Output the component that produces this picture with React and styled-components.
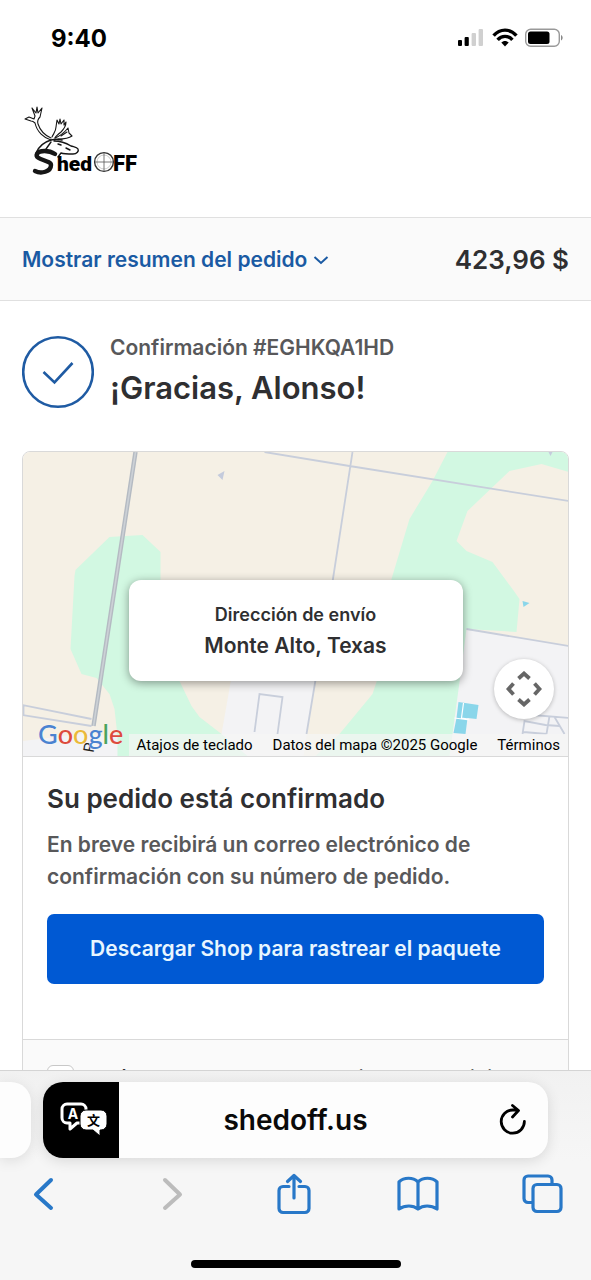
import React from "react";
import styled, { createGlobalStyle } from "styled-components";

const ui = `Inter, "Liberation Sans", sans-serif`;

const Global = createGlobalStyle`
  *, *::before, *::after { box-sizing: border-box; }
  html, body { margin: 0; background: #fff; }
  body { font-family: ${ui}; color: #2f2f31; }
  h1, h2, p { margin: 0; font-weight: 600; }
  button { font: inherit; border: 0; padding: 0; background: none; cursor: pointer; }
  a { text-decoration: none; color: inherit; }
  svg { display: block; }
`;

const Screen = styled.div`
  display: flex;
  flex-direction: column;
  height: 100vh;
  overflow: hidden;
`;

const StatusBar = styled.div`
  display: flex;
  flex: none;
  align-items: center;
  justify-content: space-between;
  height: 76px;
  padding: 0 27px 0 51px;
  background: #fff;
`;

const Clock = styled.time`
  font-size: 24px;
  font-weight: 700;
  color: #000;
`;

const Page = styled.main`
  flex: 1;
  min-height: 0;
  overflow: hidden;
`;

const Brand = styled.header`
  height: 141px;
  padding: 27px 22px 0;
`;

const SummaryBar = styled.section`
  display: flex;
  align-items: center;
  justify-content: space-between;
  height: 84px;
  padding: 0 22px;
  background: #fafafa;
  border: solid #e0e0e0;
  border-width: 1px 0;
`;

const SummaryToggle = styled.button`
  display: flex;
  align-items: center;
  gap: 6px;
  font-size: 21px;
  font-weight: 600;
  color: #1a5aa3;
`;

const Total = styled.strong`
  font-size: 26px;
  font-weight: 600;
`;

const Thanks = styled.section`
  display: flex;
  align-items: center;
  gap: 16px;
  padding: 31px 22px 39px;
`;

const ThanksText = styled.div`
  display: flex;
  flex-direction: column;
`;

const Confirmation = styled.p`
  font-size: 21px;
  line-height: 32px;
  color: #58585a;
`;

const Greeting = styled.h1`
  font-size: 31px;
  line-height: 48px;
`;

const Card = styled.section`
  margin: 0 22px;
  border: 1px solid #d9d9d9;
  border-radius: 8px;
  overflow: hidden;
`;

const MapArea = styled.div`
  position: relative;
  height: 305px;
  border-bottom: 1px solid #d9d9d9;
  overflow: hidden;
`;

const MapDrawing = styled.svg`
  width: 100%;
  height: 100%;
`;

const AddressBubble = styled.div`
  position: absolute;
  top: 128px;
  left: 50%;
  transform: translateX(-50%);
  width: 334px;
  padding: 19px 0 20px;
  border-radius: 12px;
  background: #fff;
  box-shadow: 0 2px 10px rgba(0, 0, 0, 0.4);
  text-align: center;
`;

const BubbleLabel = styled.p`
  font-size: 18px;
  line-height: 31px;
`;

const BubblePlace = styled.p`
  font-size: 21px;
  line-height: 31px;
`;

const PanButton = styled.button`
  position: absolute;
  right: 14px;
  bottom: 37px;
  display: grid;
  place-items: center;
  width: 60px;
  height: 60px;
  border-radius: 50%;
  background: #fff;
  box-shadow: 0 1px 4px rgba(0, 0, 0, 0.25);
`;

const MapFooter = styled.div`
  position: absolute;
  right: 0;
  bottom: 0;
  display: flex;
  justify-content: flex-end;
  gap: 20px;
  height: 22px;
  padding: 0 8px 0 8px;
  background: rgba(245, 245, 245, 0.7);
  font-family: Roboto, "Liberation Sans", sans-serif;
  font-size: 15px;
  line-height: 23px;
  white-space: nowrap;
  color: #000;
`;

const GoogleMark = styled.a`
  position: absolute;
  left: 15px;
  bottom: 4px;
  display: flex;
  font-family: Lato, sans-serif;
  font-size: 27px;
  font-weight: 500;
  line-height: 36px;
  text-shadow: 0 0 1px #fff;
`;

const Letter = styled.span`
  color: ${(p) => p.$color};
`;

const CardBody = styled.div`
  padding: 24px 24px 55px;
`;

const CardTitle = styled.h2`
  font-size: 26px;
  line-height: 36px;
`;

const CardText = styled.p`
  margin: 12px 0 21px;
  font-size: 21px;
  line-height: 32px;
  color: #58585a;
`;

const ShopLink = styled.a`
  display: block;
  border-radius: 7px;
  background: #0059d3;
  font-size: 21px;
  font-weight: 600;
  line-height: 70px;
  text-align: center;
  color: #e8f6ff;
`;

const OptIn = styled.label`
  display: flex;
  gap: 9px;
  padding: 23px 24px;
  border-top: 1px solid #d9d9d9;
  background: #fafafa;
  font-size: 21px;
  font-weight: 500;
  line-height: 32px;
`;

const OptInBox = styled.input`
  appearance: none;
  flex: none;
  width: 27px;
  height: 27px;
  margin: 2px 0;
  border: 1px solid #c8c8c8;
  border-radius: 6px;
  background: #fff;
`;

const BrowserBar = styled.footer`
  flex: none;
  border-top: 1px solid #d4d4d4;
  background: linear-gradient(#f1f1f1, #f6f6f6 90px);
`;

const TabStrip = styled.div`
  display: grid;
  grid-template-columns: 31px 1fr 31px;
  gap: 12px;
  height: 87px;
  padding-top: 11px;
`;

const PreviousTab = styled.div`
  height: 76px;
  border-radius: 0 20px 20px 0;
  background: #fdfdfd;
  box-shadow: 0 3px 14px rgba(0, 0, 0, 0.1);
`;

const AddressBar = styled.div`
  display: grid;
  grid-template-columns: 76px 1fr 72px;
  align-items: center;
  height: 76px;
  border-radius: 20px;
  overflow: hidden;
  background: #fdfdfd;
  box-shadow: 0 3px 14px rgba(0, 0, 0, 0.12);
`;

const TranslateButton = styled.button`
  display: grid;
  place-items: center;
  height: 76px;
  padding: 0 0 0 6px;
  background: #000;
`;

const Host = styled.div`
  padding-right: 4px;
  text-align: center;
  font-size: 28px;
  font-weight: 600;
  color: #0a0a0a;
`;

const tones = { on: "#2878c8", off: "#bcbcbc", dark: "#000" };

const IconButton = styled.button`
  display: grid;
  place-items: center;
  color: ${(p) => tones[p.$tone || "on"]};
`;

const Toolbar = styled.nav`
  display: flex;
  align-items: center;
  justify-content: space-between;
  height: 74px;
  padding: 0 27px 0 22px;
`;

const HomeIndicator = styled.div`
  width: 210px;
  height: 8px;
  margin: 28px auto 12px;
  border-radius: 4px;
  background: #000;
`;

const StatusIcons = () => (
  <svg width="106" height="20" viewBox="0 0 106 20" role="img" aria-label="Señal, wifi y batería">
    <rect x="0" y="12" width="4" height="6" rx="1" />
    <rect x="6.600" y="9" width="4.200" height="9" rx="1" />
    <rect x="13.600" y="5" width="4.400" height="13" rx="1" fill="#d0d0d0" />
    <rect x="20.600" y="1" width="4.400" height="17" rx="1" fill="#d0d0d0" />
    <g fill="none" stroke="#000" strokeWidth="3.400">
      <path d="M35.600 7.600C42 .3 52 .3 58.400 7.600" />
      <path d="M39.600 11.800c4-4.600 10.800-4.600 14.800 0" />
    </g>
    <path d="M43.300 14.600c2-2.200 5.400-2.200 7.400 0L47 18.500Z" />
    <rect x="67.700" y="1.200" width="33.600" height="17" rx="5" fill="#fff" stroke="#999" strokeWidth="1.400" />
    <rect x="70" y="3.500" width="21.500" height="12.500" rx="2.500" />
    <path d="M103 7c2.200 1 2.200 4.500 0 5.500Z" fill="#888" />
  </svg>
);

const BrandLogo = () => (
  <svg width="120" height="74" viewBox="0 0 120 74" role="img" aria-label="ShedOFF">
    <g fill="none" stroke="#161616" strokeLinecap="round" strokeLinejoin="round">
      <path strokeWidth="1.100" d="M29 37C22 35 15 29 13 20c-1-1-2-2-4-2L3 16l4-2 5 2 1-3-3-8 4 5 1-6 1 6 4-5-2 9c-2 2-3 4-2 7 2 6 6 11 13 14" />
      <path strokeWidth="1.100" d="M30 34c2-4 4-6 4-10l1-7 2 4 1-5 1 5 3-4 0 5 2-3c0 5-3 8-5 10-4 3-5 4-6 6" />
      <path strokeWidth="1.100" d="M33 35c5-2 9-5 13-10l1 5 3 3c-4 3-9 3-14 3M39 33l6-4" />
      <path strokeWidth="1.400" d="M14 50c3-7 8-11 15-13 4-1 7-1 11 0M24 46l5-7M32 38c7 0 12 2 17 5 3 1 6 1 7 3s-1 5-5 5c-5 0-9 0-12-1l-3 4M36 41l3 1M44 45l4 2" />
      <path strokeWidth="4.400" d="M33 51c-6-4-16-4-18 0-3 6 14 6 14 11 0 7-10 9-16 6" />
    </g>
    <g fontFamily="Roboto, sans-serif" fontWeight="900" fill="#000">
      <text x="35" y="68" fontSize="21">hed</text>
      <text x="91" y="68" fontSize="22">FF</text>
    </g>
    <circle cx="82" cy="59" r="9.400" fill="#fff" stroke="#333" strokeWidth="1.400" />
    <circle cx="82" cy="59" r="7" fill="none" stroke="#aaa" strokeWidth=".6" />
    <path d="M82 50v18M73 59h18" stroke="#555" strokeWidth=".8" />
  </svg>
);

const MapArt = () => (
  <MapDrawing viewBox="0 0 546 304" preserveAspectRatio="xMidYMid slice" aria-hidden="true">
    <path fill="#f5f0e5" d="M0 0h546v304H0z" />
    <path fill="#f3f3f5" d="M0 289l66-8 30 4v19H0zM209 225h84l-12 79h-66l-16-22zM444 177l102 17v110H425z" />
    <path fill="#d2f8e2" d="M87 85l33-2 18 17v60l19 69 12 25 8 11 22 17 26 22H95v-20l-3-27-5-15-13-16-15-4-11-25 4-73 1-6z" />
    <path fill="#d2f8e2" d="M425 0h121v20l-27-8-32 7-42 40-11 30 10 10 26 11 20 27 7 10-3 33-50-3-7 53-7 52-3 22H293l24-22 33-40 4-12 15-103 18-60 23-38z" />
    <g fill="none" stroke="#c8cedb" strokeWidth="1.800">
      <path d="M242 0l85 14 219 35M330 0l-20 130M293 228l-9 54M444 177l102 17M0 253l69 14M0 263l69 11M1 253v10" />
      <path d="M232 280l5-38 23 3-5 37M500 282l2-13 21 4 14 1M510 263l36 3M527 264l-3 18M532 265l10 17M501 280l23 2" />
    </g>
    <path d="M113 0L71 274" fill="none" stroke="#b4bac2" strokeWidth="4.400" />
    <path d="M113 0L71 274" fill="none" stroke="#ccd1d6" strokeWidth="1.600" />
    <path fill="#c4cbdc" d="M202 19l-7 4 5 5zM526 0h4l-2 4z" />
    <path fill="#8ad6ea" d="M500 149l7 2-6 4zM436 250l20 3-2 14-9-1-2 16-12-1 3-15z" />
    <path d="M441 251l-2 15 7 1M432 266l15 2" stroke="#fff" fill="none" strokeWidth="1.200" />
    <text x="71" y="301" transform="rotate(-80 71 301)" fontFamily="Roboto, sans-serif" fontSize="15" fill="#222">P</text>
  </MapDrawing>
);

const letters = [["G", "#4b83d0"], ["o", "#dc4b3e"], ["o", "#eab93a"], ["g", "#4b83d0"], ["l", "#4ba35d"], ["e", "#dc4b3e"]];

const ToolIcon = ({ children }) => (
  <svg width="42" height="44" viewBox="0 0 42 44" fill="none" stroke="currentColor" strokeWidth="3.200" strokeLinecap="round" strokeLinejoin="round" aria-hidden="true">
    {children}
  </svg>
);

export default function App() {
  return (
    <Screen>
      <Global />
      <StatusBar>
        <Clock>9:40</Clock>
        <StatusIcons />
      </StatusBar>
      <Page>
        <Brand><BrandLogo /></Brand>
        <SummaryBar>
          <SummaryToggle>
            Mostrar resumen del pedido
            <svg width="16" height="16" viewBox="0 0 16 16" fill="none" stroke="currentColor" strokeWidth="2"><path d="M1.500 6L8 12l6.500-6" /></svg>
          </SummaryToggle>
          <Total>423,96 $</Total>
        </SummaryBar>
        <Thanks>
          <svg width="72" height="74" viewBox="0 0 72 74" fill="none" stroke="#1f5ba3" aria-hidden="true">
            <circle cx="36" cy="37" r="34.800" strokeWidth="2.600" />
            <path d="M21.500 37l11 10.500 18-19.500" strokeWidth="2.600" />
          </svg>
          <ThanksText>
            <Confirmation>Confirmación #EGHKQA1HD</Confirmation>
            <Greeting>¡Gracias, Alonso!</Greeting>
          </ThanksText>
        </Thanks>
        <Card>
          <MapArea>
            <MapArt />
            <MapFooter>
              <span>Atajos de teclado</span>
              <span>Datos del mapa ©2025 Google</span>
              <a href="#terminos">Términos</a>
            </MapFooter>
            <GoogleMark href="#google" aria-label="Google">
              {letters.map(([c, color], i) => <Letter key={i} $color={color}>{c}</Letter>)}
            </GoogleMark>
            <AddressBubble>
              <BubbleLabel>Dirección de envío</BubbleLabel>
              <BubblePlace>Monte Alto, Texas</BubblePlace>
            </AddressBubble>
            <PanButton aria-label="Controles de cámara del mapa">
              <svg width="36" height="36" viewBox="0 0 36 36" fill="none" stroke="#666" strokeWidth="3.800">
                <path d="M12.500 7.500l5.500-5 5.500 5M12.500 28.500l5.500 5 5.500-5M7.500 12.500l-5 5.500 5 5.500M28.500 12.500l5 5.500-5 5.500" />
              </svg>
            </PanButton>
          </MapArea>
          <CardBody>
            <CardTitle>Su pedido está confirmado</CardTitle>
            <CardText>En breve recibirá un correo electrónico de confirmación con su número de pedido.</CardText>
            <ShopLink href="#shop">Descargar Shop para rastrear el paquete</ShopLink>
          </CardBody>
          <OptIn>
            <OptInBox type="checkbox" />
            <span>Envíame un correo electrónico con noticias</span>
          </OptIn>
        </Card>
      </Page>
      <BrowserBar>
        <TabStrip>
          <PreviousTab />
          <AddressBar>
            <TranslateButton aria-label="Traducir">
              <svg width="48" height="36" viewBox="0 0 48 36">
                <path d="M7 2h14a5 5 0 0 1 5 5v9a5 5 0 0 1-5 5h-4l-7 6v-6H7a5 5 0 0 1-5-5V7a5 5 0 0 1 5-5Z" fill="none" stroke="#fff" strokeWidth="3" strokeLinejoin="round" />
                <path d="M26 8h15a6 6 0 0 1 6 6v8a6 6 0 0 1-6 6h-1v6l-7-6h-7a6 6 0 0 1-6-6v-8a6 6 0 0 1 6-6Z" fill="#fff" stroke="#000" strokeWidth="1" />
                <text x="13" y="17" textAnchor="middle" fontFamily="Inter, sans-serif" fontSize="14" fontWeight="700" fill="#fff">A</text>
                <text x="33.500" y="23" textAnchor="middle" fontFamily="'Noto Sans CJK SC', sans-serif" fontSize="13" fontWeight="700">文</text>
              </svg>
            </TranslateButton>
            <Host>shedoff.us</Host>
            <IconButton $tone="dark" aria-label="Recargar">
              <svg width="28" height="32" viewBox="0 0 28 32" fill="none" stroke="currentColor" strokeWidth="2.800" strokeLinecap="round" strokeLinejoin="round">
                <path d="M19 6H15A11.600 11.600 0 1 0 26.400 17.500M14.500 1.500L20.500 6.500 14.500 13" />
              </svg>
            </IconButton>
          </AddressBar>
        </TabStrip>
        <Toolbar>
          <IconButton aria-label="Atrás">
            <ToolIcon><path strokeWidth="4" d="M29 7L14 21.500 29 35" /></ToolIcon>
          </IconButton>
          <IconButton $tone="off" aria-label="Adelante">
            <ToolIcon><path strokeWidth="4" d="M18 7l15 14.500L18 35" /></ToolIcon>
          </IconButton>
          <IconButton aria-label="Compartir">
            <ToolIcon><path d="M17 13.500h-6a4 4 0 0 0-4 4v18a4 4 0 0 0 4 4h22a4 4 0 0 0 4-4v-18a4 4 0 0 0-4-4h-6M22 25V2.500M15.500 8.500l6.500-6 6.500 6" /></ToolIcon>
          </IconButton>
          <IconButton aria-label="Marcadores">
            <ToolIcon><path d="M21 9C16 4 7 4 2 9v27c6-4 14-4 19 0 5-4 13-4 19 0V9C35 4 26 4 21 9v27" /></ToolIcon>
          </IconButton>
          <IconButton aria-label="Pestañas">
            <ToolIcon>
              <path d="M10 29.500H6a4 4 0 0 1-4-4V7a4 4 0 0 1 4-4h20a4 4 0 0 1 4 4v4" />
              <rect x="11" y="11.500" width="28" height="27" rx="4" />
            </ToolIcon>
          </IconButton>
        </Toolbar>
        <HomeIndicator />
      </BrowserBar>
    </Screen>
  );
}
